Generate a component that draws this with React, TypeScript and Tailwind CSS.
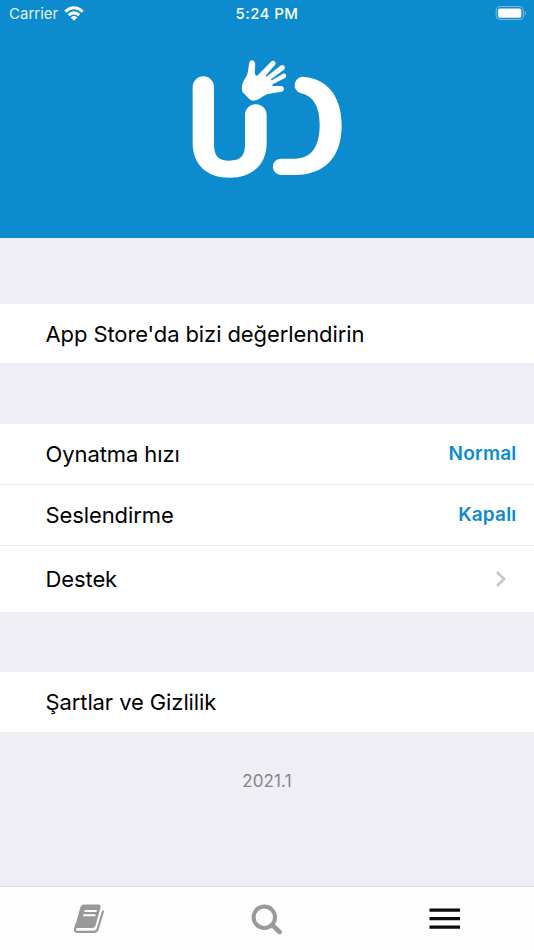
import type { ReactNode } from 'react';

function Logo() {
  return (
    <svg className="mt-[22px] h-[140px] w-[174px]" viewBox="0 0 522 420" fill="#fff">
      <path d="M38 111A32 32 0 0 1 102 111V283C102 320 116 332 148 332C182 332 195 318 195 283V195A32.5 32.5 0 0 1 260 195V278C260 345 215 383 149 383C82 383 38 345 38 278Z" />
      <path d="M375 81C450 88 485 150 485 227C485 320 435 374 345 375H303A24.5 24.5 0 0 1 303 326H345C395 325 419 290 419 225C419 170 400 138 363 130A25 25 0 0 1 375 81Z" />
      <path d="M208 38C210 28 222 28 225 39C227 52 222 64 226 75C230 79 234 76 237 72L273 35C281 28 291 36 285 45L258 76C256 80 258 81 261 79L301 47C310 41 319 51 312 59L274 87C272 90 274 92 277 90L308 72C318 67 323 79 315 84L278 103C276 106 277 108 280 108L303 108C315 109 314 122 305 125L268 131C248 134 239 152 219 152C207 151 202 138 190 129C181 117 187 96 196 84C207 67 204 51 208 38Z" />
    </svg>
  );
}

function StatusBar() {
  return (
    <div className="grid h-7 grid-cols-3 items-center pl-[9px] pr-[7px] text-[15px] leading-7 text-white">
      <div className="flex items-center gap-[6px]">
        <span className="opacity-90">Carrier</span>
        <svg className="mb-[2px] h-[15px] w-5" viewBox="0 0 20 15" fill="none" stroke="#fff" strokeWidth="3">
          <path d="M1.3 5.6Q10-2.1 18.7 5.6M4.7 9.1Q10 4.6 15.3 9.1" />
          <path d="M10 14.7L6.7 11.4Q10 8.6 13.3 11.4Z" fill="#fff" stroke="none" />
        </svg>
      </div>
      <span className="-ml-[2px] text-center font-medium tracking-[0.4px]">5:24 PM</span>
      <svg className="mb-[2px] h-4 w-8 justify-self-end" viewBox="0 0 32 16">
        <rect x="1.2" y="1.5" width="27" height="13" rx="3.8" fill="none" stroke="#78bce2" strokeWidth="1.1" />
        <rect x="3.1" y="3.4" width="23.2" height="9.3" rx="1.5" fill="#fff" />
        <path d="M29.7 5.5Q32.7 8 29.7 10.5Z" fill="#78bce2" />
      </svg>
    </div>
  );
}

function Row({ label, className, children }: { label: string; className: string; children?: ReactNode }) {
  return (
    <div className={`flex items-center justify-between bg-white pl-[45.5px] pr-[17.5px] ${className}`}>
      <span className="text-[22px] leading-7 tracking-[-0.1px] text-black">{label}</span>
      {children}
    </div>
  );
}

function Value({ children }: { children: ReactNode }) {
  return <span className="text-[19px] font-semibold leading-7 tracking-[0.2px] text-[#0c8bcf]">{children}</span>;
}

export default function App() {
  return (
    <div className="flex h-[950px] w-[534px] flex-col overflow-hidden bg-[#efeef4] font-['Inter',sans-serif]">
      <header className="flex h-[237.5px] shrink-0 flex-col bg-[#0c8bcf]">
        <StatusBar />
        <div className="flex justify-center">
          <Logo />
        </div>
      </header>

      <main className="flex flex-1 flex-col pt-[66px]">
        <Row label="App Store'da bizi değerlendirin" className="h-[59.5px] pt-px" />
        <section className="mt-[61px]">
          <Row label="Oynatma hızı" className="h-[61px] border-b border-[#ececf0]">
            <Value>Normal</Value>
          </Row>
          <Row label="Seslendirme" className="h-[61px] border-b border-[#ececf0]">
            <Value>Kapalı</Value>
          </Row>
          <Row label="Destek" className="h-[66px]">
            <svg className="mr-[9.5px] h-[18px] w-3" viewBox="0 0 12 18" fill="none" stroke="#c7c7cc" strokeWidth="2.7">
              <path d="M2 2L9 9L2 16" />
            </svg>
          </Row>
        </section>
        <Row label="Şartlar ve Gizlilik" className="mt-[60px] h-[60px]" />
        <p className="mt-[37px] text-center text-[17px] leading-6 tracking-[0.1px] text-[#858589]">2021.1</p>
      </main>

      <nav className="grid h-16 shrink-0 grid-cols-3 items-center justify-items-center border-t border-[#dfdfe3] bg-[#fdfdfd]">
        <svg className="h-8 w-8" viewBox="0 0 32 32" fill="none">
          <path d="M7.5 4Q8.3 1.6 11 1.6H25.5Q28.2 1.6 27.5 4.5L22.8 21.8Q22 25 19 25H5.3Q3.2 25 1.2 26.3Z" fill="#999" />
          <path d="M3 22L2.1 25.5Q1.2 28.9 4.8 28.9H20.5Q23.7 28.9 24.7 25.8L29.9 8.5" stroke="#999" strokeWidth="2.2" strokeLinecap="round" />
          <path d="M3.8 26.4H20.3Q22.4 26.4 23.1 24.2L28.3 6.5" stroke="#fdfdfd" strokeWidth="1.4" />
          <path d="M11.5 8H23.7M10.3 12.3H22.4" stroke="#fdfdfd" strokeWidth="2" />
        </svg>
        <svg className="h-8 w-8" viewBox="0 0 32 32" fill="none" stroke="#999">
          <circle cx="13.3" cy="14.2" r="10.7" strokeWidth="4" />
          <path d="M21.3 22L28.6 29" strokeWidth="4.6" strokeLinecap="round" />
        </svg>
        <svg className="h-8 w-8" viewBox="0 0 32 32" stroke="#0b0b0b" strokeWidth="3.3">
          <path d="M.5 7.2H31M.5 15.7H31M.5 24.2H31" />
        </svg>
      </nav>
    </div>
  );
}
